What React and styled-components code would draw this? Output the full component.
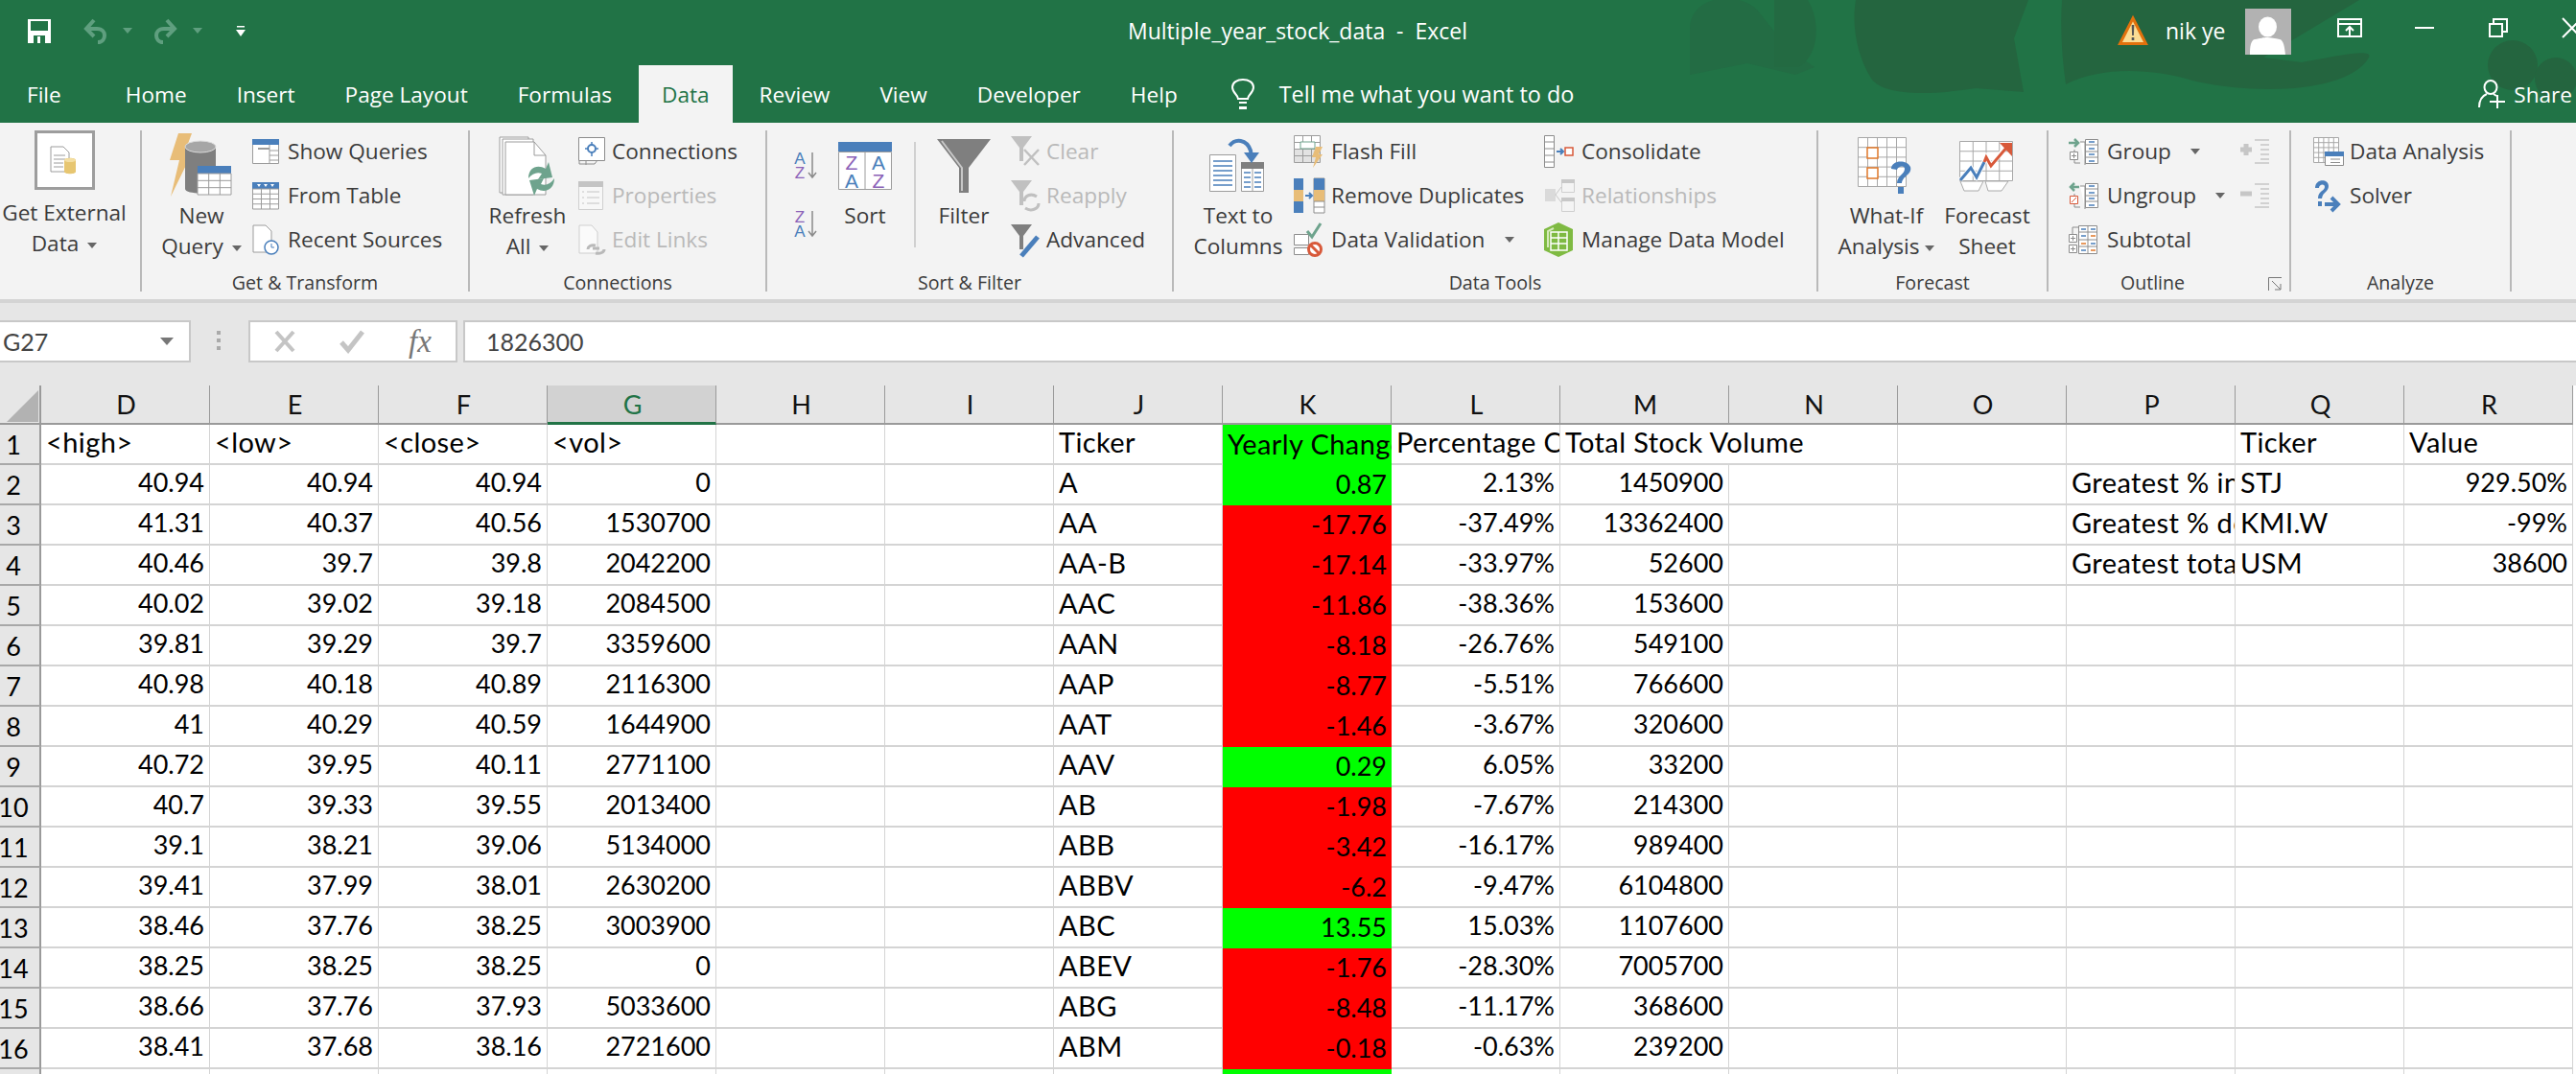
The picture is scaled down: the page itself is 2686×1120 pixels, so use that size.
import React from "react"
import styled, { createGlobalStyle } from "styled-components"

const GREEN = "#217346"
const BLUE = "#4a7fbb"
const PURPLE = "#8b62b8"
const GREY = "#7f7f7f"
const LINE = "#9a9a9a"
const OFF = "#b9b9b9"
const UI_FONT = `"Open Sans", "Noto Sans", sans-serif`
const CELL_FONT = `Lato, "Liberation Sans", sans-serif`

const GlobalStyle = createGlobalStyle`
  html, body {
    margin: 0;
    padding: 0;
    background: #ffffff;
    overflow: hidden;
  }
`

const Window = styled.div`
  width: 2686px;
  height: 1120px;
  overflow: hidden;
  font-family: ${UI_FONT};
  background: #fff;
`

/* title bar */
const TitleBar = styled.div`
  position: relative;
  height: 128px;
  background: ${GREEN};
  overflow: hidden;
`
const Backdrop = styled.svg`
  position: absolute;
  left: 0;
  top: 0;
`
const TopRow = styled.div`
  position: relative;
  display: flex;
  align-items: center;
  height: 68px;
  padding-bottom: 4px;
  box-sizing: border-box;
  color: #fff;
  font-size: 23px;
`
const Qat = styled.div`
  display: flex;
  align-items: center;
  flex: 0 0 1176px;
  box-sizing: border-box;
  padding-left: 28px;
`
const QatSlot = styled.div`
  display: flex;
  margin-left: ${(p) => p.$ml || 0}px;
`
const QatCaret = styled.div`
  margin-left: ${(p) => p.$ml || 0}px;
  border-left: 5px solid transparent;
  border-right: 5px solid transparent;
  border-top: 6px solid #5f9f7f;
`
const DocTitle = styled.div`
  flex: 0 0 1033px;
  white-space: pre;
`
const Account = styled.div`
  display: flex;
  align-items: center;
`
const UserName = styled.div`
  margin: 0 20px 0 19px;
  width: 63px;
  white-space: nowrap;
`
const Avatar = styled.svg`
  display: block;
  margin-top: 2px;
`
const WindowButton = styled.div`
  display: flex;
  margin-left: ${(p) => p.$ml}px;
  margin-top: -6px;
`
const TabRow = styled.div`
  position: relative;
  display: flex;
  align-items: stretch;
  gap: 4px;
  height: 60px;
  padding-left: 4px;
  color: #fff;
  font-size: 22.6px;
`
const Tab = styled.div`
  display: flex;
  align-items: center;
  padding: 0 24px;
  margin-right: ${(p) => p.$mr || 0}px;
  background: ${(p) => (p.$active ? "#f3f3f3" : "transparent")};
  color: ${(p) => (p.$active ? GREEN : "#fff")};
  white-space: nowrap;
`
const TellMe = styled.div`
  display: flex;
  align-items: center;
  gap: 26px;
  margin-left: 28px;
  font-size: 23.4px;
  white-space: nowrap;
`
const Share = styled.div`
  display: flex;
  align-items: center;
  gap: 9px;
  margin-left: auto;
  padding-right: 4px;
  white-space: nowrap;
`

/* ribbon */
const Ribbon = styled.div`
  display: flex;
  height: 188px;
  box-sizing: border-box;
  padding-top: 8px;
  background: #f3f3f3;
  border-bottom: 4px solid #d4d4d4;
  color: #3b3b3b;
  font-size: 22.6px;
`
const Group = styled.div`
  position: relative;
  display: flex;
  flex-direction: column;
  flex: 0 0 ${(p) => p.$w}px;
  height: 168px;
  box-sizing: border-box;
  border-right: 2px solid #b9b9b9;
`
const GroupBody = styled.div`
  display: flex;
  flex: 0 0 146px;
  padding-left: ${(p) => p.$pad || 0}px;
`
const GroupLabel = styled.div`
  height: 22px;
  line-height: 25px;
  text-align: center;
  white-space: nowrap;
  font-size: 19.6px;
  padding-right: ${(p) => p.$shift || 0}px;
`
const BigButton = styled.div`
  display: flex;
  flex-direction: column;
  align-items: center;
  flex: 0 0 ${(p) => p.$w}px;
  line-height: 32px;
  text-align: center;
  white-space: nowrap;
`
const BigIcon = styled.div`
  display: flex;
  align-items: ${(p) => (p.$top ? "flex-start" : "center")};
  justify-content: center;
  height: ${(p) => p.$h || 73}px;
`
const ExternalBox = styled.div`
  display: flex;
  align-items: center;
  justify-content: center;
  width: 63px;
  height: 62px;
  box-sizing: border-box;
  background: #fff;
  border: 3px solid #9d9d9d;
`
const Stack = styled.div`
  display: flex;
  flex-direction: column;
  flex: 0 0 ${(p) => (p.$w ? `${p.$w}px` : "auto")};
  margin-left: ${(p) => p.$ml || 0}px;
`
const SmallItem = styled.div`
  display: flex;
  align-items: center;
  height: 46px;
  box-sizing: border-box;
  padding-bottom: 3px;
  white-space: nowrap;
  color: ${(p) => (p.$off ? OFF : "inherit")};
`
const IconSlot = styled.div`
  display: flex;
  flex: 0 0 ${(p) => p.$w}px;
`
const Caret = styled.span`
  display: inline-block;
  width: 0;
  height: 0;
  margin-left: ${(p) => p.$ml || 9}px;
  vertical-align: 3px;
  border-left: 5px solid transparent;
  border-right: 5px solid transparent;
  border-top: 6px solid #666;
`
const SortStack = styled.div`
  display: flex;
  flex-direction: column;
  flex: 0 0 45px;
  gap: 31px;
  padding-top: 21px;
`
const InnerDivider = styled.div`
  flex: 0 0 2px;
  height: 110px;
  margin: 12px 20px 0 21px;
  background: #d0d0d0;
`
const Launcher = styled.svg`
  position: absolute;
  right: 8px;
  bottom: 1px;
`

/* formula bar */
const FormulaArea = styled.div`
  display: flex;
  align-items: flex-start;
  height: 86px;
  box-sizing: border-box;
  padding-top: 18px;
  background: #e6e6e6;
`
const FormulaBox = styled.div`
  display: flex;
  align-items: center;
  height: 44px;
  box-sizing: border-box;
  background: #fff;
  border: 2px solid #c8c8c8;
  color: #444;
  font-family: ${CELL_FONT};
  font-size: 25px;
`
const NameBox = styled(FormulaBox)`
  flex: 0 0 199px;
  justify-content: space-between;
  padding: 0 16px 0 3px;
  border-left: 0;
`
const NameCaret = styled.div`
  border-left: 7px solid transparent;
  border-right: 7px solid transparent;
  border-top: 8px solid #777;
`
const Grip = styled.div`
  display: flex;
  flex-direction: column;
  gap: 4px;
  flex: 0 0 60px;
  align-items: center;
  padding-top: 11px;
  padding-right: 2px;
  box-sizing: border-box;
`
const GripDot = styled.div`
  width: 4px;
  height: 4px;
  background: #aaa;
`
const FxBox = styled(FormulaBox)`
  flex: 0 0 218px;
  justify-content: center;
  gap: 46px;
  margin-right: 6px;
`
const FxMark = styled.span`
  font-family: "Liberation Serif", serif;
  font-style: italic;
  font-size: 33px;
  color: #777;
`
const FormulaInput = styled(FormulaBox)`
  flex: 1;
  padding-left: 22px;
  border-right: 0;
`

/* sheet */
const Sheet = styled.div`
  display: grid;
  grid-template-columns: 43px repeat(15, 176px) 3px;
  grid-template-rows: 41px repeat(17, 42px);
  background: #fff;
  color: #000;
  font-family: ${CELL_FONT};
  font-size: 27px;
`
const Corner = styled.div`
  display: flex;
  background: #e6e6e6;
  border-right: 2px solid ${LINE};
  border-bottom: 2px solid ${LINE};
  box-sizing: border-box;
`
const ColHeader = styled.div`
  display: flex;
  align-items: center;
  justify-content: center;
  box-sizing: border-box;
  padding-left: 2px;
  background: ${(p) => (p.$selected ? "#d2d2d2" : "#e6e6e6")};
  color: ${(p) => (p.$selected ? GREEN : "#111")};
  border-right: 1px solid ${LINE};
  border-bottom: ${(p) => (p.$selected ? `3px solid ${GREEN}` : `2px solid ${LINE}`)};
`
const RowHeader = styled.div`
  display: flex;
  align-items: center;
  justify-content: center;
  box-sizing: border-box;
  padding-right: 13px;
  background: #e6e6e6;
  border-right: 2px solid ${LINE};
  border-bottom: 2px solid #a8a8a8;
`
const Cell = styled.div`
  display: flex;
  align-items: flex-end;
  justify-content: ${(p) => (p.$right ? "flex-end" : "flex-start")};
  box-sizing: border-box;
  padding: 0 5px 5px;
  line-height: 34px;
  white-space: nowrap;
  overflow: ${(p) => (p.$spill ? "visible" : "hidden")};
  font-size: ${(p) => (p.$right ? 27 : 29)}px;
  letter-spacing: ${(p) => (p.$right ? 0 : 0.4)}px;
  background: ${(p) => p.$fill || "transparent"};
  border-right: ${(p) => (p.$fill || p.$spill ? "0" : "1px solid #d4d4d4")};
  border-bottom: ${(p) => (p.$fill ? "0" : "2px solid #d4d4d4")};
`
const Edge = styled.div`
  background: #fff;
`

/* drawing helpers */
const Lines = ({ x, y, w, h, cols, rows, color = "#9c9c9c" }) => {
  const out = []
  for (let i = 0; i <= cols; i++) {
    const px = x + (w * i) / cols
    out.push(<line key={`c${i}`} x1={px} y1={y} x2={px} y2={y + h} stroke={color} strokeWidth="1" />)
  }
  for (let i = 0; i <= rows; i++) {
    const py = y + (h * i) / rows
    out.push(<line key={`r${i}`} x1={x} y1={py} x2={x + w} y2={py} stroke={color} strokeWidth="1" />)
  }
  return <g>{out}</g>
}

const Ico = ({ w, h, children }) => (
  <svg width={w} height={h} viewBox={`0 0 ${w} ${h}`} style={{ display: "block", overflow: "visible" }}>
    {children}
  </svg>
)

const Letter = ({ x, y, size, color, children }) => (
  <text x={x} y={y} fontFamily="Liberation Sans, sans-serif" fontSize={size} fill={color} textAnchor="middle">
    {children}
  </text>
)

const SaveIcon = () => (
  <Ico w={26} h={26}>
    <path d="M1 1h24v25H1z" fill="#fff" />
    <path d="M4 3h18v10H4z" fill={GREEN} />
    <path d="M7 18h12v8H7z" fill={GREEN} />
    <path d="M11 19h3v7h-3z" fill="#fff" />
  </Ico>
)
const UndoIcon = ({ flip }) => (
  <Ico w={26} h={27}>
    <g transform={flip ? "translate(26 0) scale(-1 1)" : undefined} fill="none" stroke="#5f9f7f" strokeWidth="4">
      <path d="M12 2 4 11l8 8" />
      <path d="M4 11h11c6 0 8 4 8 7s-2 7-7 7" />
    </g>
  </Ico>
)
const CustomizeIcon = () => (
  <Ico w={10} h={12}>
    <path d="M1 1h8v1.5H1z" fill="#fff" />
    <path d="M0 5h10l-5 7z" fill="#fff" />
  </Ico>
)
const WarnIcon = () => (
  <Ico w={30} h={30}>
    <path d="M15 2 28.5 28.5H1.5z" fill="#fbdc94" stroke="#e2710d" strokeWidth="3" strokeLinejoin="miter" />
    <path d="M13.7 9h2.6l-.4 11h-1.8z" fill="#555" />
    <path d="M13.7 22h2.6v3h-2.6z" fill="#555" />
  </Ico>
)
const AvatarIcon = () => (
  <Avatar width="48" height="48" viewBox="0 0 48 48">
    <path d="M0 0h48v48H0z" fill="#b2b2b2" />
    <ellipse cx="23.5" cy="19" rx="9.5" ry="10.5" fill="#fff" />
    <path d="M5 48c0-9 1-15 5-16 6-1 9-2 13-2s8 1 13 2c4 1 5 7 6 16z" fill="#fff" />
  </Avatar>
)
const RibbonDisplayIcon = () => (
  <Ico w={26} h={20}>
    <path d="M1 1h24v18H1zM1 6h24" fill="none" stroke="#fff" strokeWidth="2" />
    <path d="M13 19V9m-4 4 4-4 4 4" fill="none" stroke="#fff" strokeWidth="2" />
  </Ico>
)
const MinIcon = () => (
  <Ico w={20} h={20}>
    <path d="M0 10h20" stroke="#fff" strokeWidth="2" />
  </Ico>
)
const RestoreIcon = () => (
  <Ico w={20} h={20}>
    <path d="M1 6h13v13H1zM5 6V1h14v13h-5" fill="none" stroke="#fff" strokeWidth="2" />
  </Ico>
)
const CloseIcon = () => (
  <Ico w={20} h={20}>
    <path d="M0 0l19 20M20 0 0 20" fill="none" stroke="#fff" strokeWidth="2" />
  </Ico>
)
const ShareIcon = () => (
  <Ico w={28} h={30}>
    <ellipse cx="13" cy="8" rx="6.5" ry="7" fill="none" stroke="#fff" strokeWidth="2" />
    <path d="M1 29c0-8 3-12 8-14M16 15l3 2" fill="none" stroke="#fff" strokeWidth="2" />
    <path d="M12 23h16M20 16v14" stroke="#fff" strokeWidth="2" />
  </Ico>
)
const BulbIcon = () => (
  <Ico w={24} h={32}>
    <path d="M7 21c0-4-6-6-6-12C1 4 6 1 12 1s11 3 11 8c0 6-6 8-6 12z" fill="none" stroke="#fff" strokeWidth="2" />
    <path d="M8 24h8v2H8zM8 29h8v3H8z" fill="#fff" />
  </Ico>
)

const ExternalDataIcon = () => (
  <Ico w={30} h={30}>
    <path d="M1 1h13l6 6v20H1z" fill="#fff" stroke="#9c9c9c" />
    <path d="M4 10h12M4 14h12M4 18h10M4 22h10" stroke="#9c9c9c" />
    <path d="M15 15c0-3 12-3 12 0v12c0 3-12 3-12 0z" fill="#e7c671" />
    <ellipse cx="21" cy="15" rx="6" ry="2" fill="#f4dfa3" />
  </Ico>
)
const NewQueryIcon = () => (
  <Ico w={68} h={68}>
    <path d="M10 0h14l-7 19h8L2 66l9-38H1z" fill="#e8bd78" />
    <path d="M17 14c0-6 32-6 32 0v44c0 6-32 6-32 0z" fill={GREY} />
    <ellipse cx="33" cy="14" rx="16" ry="6" fill="#a6a6a6" stroke="#dcdcdc" />
    <path d="M30 34h35v30H30z" fill="#fff" />
    <path d="M30 34h35v8H30z" fill={BLUE} />
    <Lines x={30} y={42} w={35} h={22} cols={3} rows={3} />
  </Ico>
)
const ShowQueriesIcon = () => (
  <Ico w={28} h={26}>
    <path d="M.5.5h27v25H.5z" fill="#fff" stroke="#9c9c9c" />
    <path d="M0 0h28v6H0z" fill={BLUE} />
    <path d="M6 9h12v2H6z" fill="#9c9c9c" />
    <path d="M18 12h10M18 17h10M18 22h10M18 6v20" stroke="#9c9c9c" />
  </Ico>
)
const FromTableIcon = () => (
  <Ico w={28} h={28}>
    <path d="M.5.5h27v27H.5z" fill="#fff" />
    <path d="M0 0h28v7H0z" fill={BLUE} />
    <path d="M5 2h4l-2 3zM12 2h4l-2 3zM19 2h4l-2 3z" fill="#fff" />
    <Lines x={0.5} y={7} w={27} h={21} cols={3} rows={4} />
  </Ico>
)
const RecentIcon = () => (
  <Ico w={28} h={32}>
    <path d="M1 1h13l6 6v22H1z" fill="#fff" stroke="#9c9c9c" />
    <circle cx="20" cy="24" r="7" fill="#fff" stroke={BLUE} strokeWidth="1.5" />
    <path d="M20 20v4h3" fill="none" stroke={BLUE} />
  </Ico>
)
const RefreshIcon = () => (
  <Ico w={60} h={62}>
    <path d="M1 1h30v58H1z" fill="#fff" stroke="#9c9c9c" />
    <path d="M4 3h32v58H4z" fill="#fff" stroke="#9c9c9c" />
    <path d="M7 6h30l12 14v41H7z" fill="#fff" stroke="#9c9c9c" />
    <path d="M37 6v14h12" fill="none" stroke="#9c9c9c" />
    <path d="M31 44c0-11 9-15 18-10l3-7 4 16-15 2 4-6c-5-2-10 0-14 5z" fill="#6ea38d" />
    <path d="M58 44c0 11-9 16-18 11l-3 7-5-16 15-2-3 6c5 2 10 0 14-6z" fill="#6ea38d" />
  </Ico>
)
const ConnectionsIcon = () => (
  <Ico w={28} h={30}>
    <path d="M.5.5h27v24H.5z" fill="#fff" stroke="#8c8c8c" />
    <path d="M14 5v15M7 12h14" stroke={BLUE} strokeWidth="1.5" />
    <circle cx="14" cy="12" r="4" fill="#fff" stroke={BLUE} strokeWidth="2" />
    <path d="M1 25v3h16l3-4M8 25v4" fill="none" stroke="#8c8c8c" />
  </Ico>
)
const PropertiesIcon = () => (
  <Ico w={26} h={30}>
    <path d="M.5.5h25v29H.5z" fill="#f7f7f7" stroke="#cfcfcf" />
    <path d="M0 0h26v6H0z" fill="#c4c4c4" />
    <path d="M4 11h2M4 17h2M4 23h2M9 11h13M9 17h13M9 23h13" stroke="#c4c4c4" />
  </Ico>
)
const EditLinksIcon = () => (
  <Ico w={28} h={32}>
    <path d="M1 1h13l6 7v22H1z" fill="#fafafa" stroke="#cfcfcf" />
    <path d="M10 26c0-3 3-5 8-4M27 26c0 3-4 5-9 4" fill="none" stroke="#b9b9b9" strokeWidth="3" />
    <path d="M15 25h7" stroke="#b9b9b9" strokeWidth="3" />
  </Ico>
)
const SortSmallIcon = ({ first, second, c1, c2 }) => (
  <Ico w={27} h={30}>
    <Letter x={7} y={14} size={17} color={c1}>{first}</Letter>
    <Letter x={7} y={29} size={17} color={c2}>{second}</Letter>
    <path d="M20 2v26M16 23l4 5 4-5" fill="none" stroke="#8a8a8a" strokeWidth="1.5" />
  </Ico>
)
const SortBigIcon = () => (
  <Ico w={56} h={50}>
    <path d="M.5 10.5h55v39H.5zM28 10v40" fill="#fff" stroke="#9c9c9c" />
    <path d="M0 0h56v10H0z" fill={BLUE} />
    <Letter x={14} y={29} size={21} color={PURPLE}>Z</Letter>
    <Letter x={14} y={48} size={21} color={BLUE}>A</Letter>
    <Letter x={42} y={29} size={21} color={BLUE}>A</Letter>
    <Letter x={42} y={48} size={21} color={PURPLE}>Z</Letter>
  </Ico>
)
const FunnelBig = () => (
  <Ico w={56} h={56}>
    <path d="M0 0h56L33 30v26H23V30z" fill={GREY} />
    <path d="M5 2 26 30v24" fill="none" stroke="#c8c8c8" strokeWidth="2" />
  </Ico>
)
const FunnelSmall = ({ color, children }) => (
  <Ico w={32} h={32}>
    <path d="M0 0h22L13 12v14H9V12z" fill={color} />
    {children}
  </Ico>
)
const ClearIcon = () => (
  <FunnelSmall color="#c0c0c0">
    <path d="M14 14l15 16M29 14 14 30" stroke="#c0c0c0" strokeWidth="2.5" />
  </FunnelSmall>
)
const ReapplyIcon = () => (
  <FunnelSmall color="#c0c0c0">
    <path d="M14 22c0-6 7-9 13-5M29 24c0 6-8 9-14 5" fill="none" stroke="#c0c0c0" strokeWidth="3" />
  </FunnelSmall>
)
const AdvancedIcon = () => (
  <FunnelSmall color={GREY}>
    <path d="M28 13 11 33" stroke={BLUE} strokeWidth="5" />
  </FunnelSmall>
)
const TextColumnsIcon = () => (
  <Ico w={60} h={56}>
    <path d="M.5 16.5h27v38H.5z" fill="#fff" stroke="#9c9c9c" />
    <path d="M4 23h20M4 28h20M4 33h20M4 38h20M4 43h20M4 48h20" stroke={BLUE} strokeWidth="1.5" />
    <path d="M33.5 24.5h23v30h-23zM45 24v30" fill="#fff" stroke="#9c9c9c" />
    <path d="M33 24h24v7H33z" fill={GREY} />
    <path d="M36 35h7M47 35h7M36 40h7M47 40h7M36 45h7M47 45h7M36 50h7M47 50h7" stroke={BLUE} strokeWidth="1.5" />
    <path d="M21 7c6-8 18-7 22 5l1 8" fill="none" stroke={BLUE} strokeWidth="4" />
    <path d="M36 14h16l-8 11z" fill={BLUE} />
  </Ico>
)
const FlashFillIcon = () => (
  <Ico w={30} h={34}>
    <path d="M.5.5h27v28H.5z" fill="#fff" />
    <path d="M1 14h26v14H1z" fill="#e2e2e2" />
    <Lines x={0.5} y={0.5} w={27} h={28} cols={3} rows={4} />
    <path d="M7 7h15v7H7z" fill="#fff" stroke="#6ea38d" />
    <path d="M23 12h7l-4 8h4L20 34l3-11h-4z" fill="#e8bd78" />
  </Ico>
)
const RemoveDupIcon = () => (
  <Ico w={32} h={36}>
    <path d="M0 0h10v36H0z" fill={BLUE} />
    <path d="M0 12h10v12H0z" fill="#e8bd78" />
    <path d="M21 0h11v36H21z" fill="#fff" stroke="#8c8c8c" />
    <path d="M21 0h11v12H21z" fill={BLUE} />
    <path d="M21 12h11v12H21z" fill="#e8bd78" />
    <path d="M21 24h11M21 30h11" stroke="#8c8c8c" />
    <path d="M12 18h7M16 15l3 3-3 3" fill="none" stroke={BLUE} strokeWidth="2" />
  </Ico>
)
const ValidationIcon = () => (
  <Ico w={30} h={36}>
    <path d="M.5 12.5h15v11H.5zM.5 26.5h15v7H.5z" fill="#fff" stroke="#8c8c8c" />
    <path d="M14 9l5 6L28 1" fill="none" stroke="#6ea38d" strokeWidth="3" />
    <circle cx="22" cy="28" r="6.5" fill="#fff" stroke="#d8593a" strokeWidth="3" />
    <path d="M17.5 23.5l9 9" stroke="#d8593a" strokeWidth="3" />
  </Ico>
)
const ConsolidateIcon = () => (
  <Ico w={30} h={34}>
    <path d="M.5.5h10v33H.5z" fill="#fff" stroke="#8c8c8c" />
    <path d="M0 7h11M0 14h11M0 21h11M0 28h11" stroke="#8c8c8c" />
    <path d="M13 17h7M17 14l3 3-3 3" fill="none" stroke={BLUE} strokeWidth="2" />
    <path d="M22 13h8v8h-8z" fill="#fff" stroke="#d8593a" strokeWidth="1.5" />
  </Ico>
)
const RelationshipsIcon = () => (
  <Ico w={32} h={36}>
    <path d="M1 11h11v13H1z" fill="#dadada" />
    <path d="M18.5 1.500h13v13h-13zM18.5 20.500h13v14h-13z" fill="#f4f4f4" stroke="#cfcfcf" />
    <path d="M18 1h14v4H18zM18 20h14v4H18z" fill="#c8c8c8" />
    <path d="M12 17l6-8M12 17l6 8" fill="none" stroke="#c8c8c8" />
  </Ico>
)
const ModelIcon = () => (
  <Ico w={30} h={36}>
    <path d="M15 0 30 7v22l-15 7L0 29V7z" fill="#7fba42" />
    <path d="M7 10h17v19H7z" fill="none" stroke="#fff" strokeWidth="1.5" />
    <path d="M7 16h17M15 10v19M7 22h17" stroke="#fff" strokeWidth="1.5" />
    <path d="M10 6 4 9v17" fill="none" stroke="#d6eabb" strokeWidth="2" />
  </Ico>
)
const WhatIfIcon = () => (
  <Ico w={60} h={60}>
    <path d="M.5.5h50v51H.5z" fill="#fff" />
    <Lines x={0.5} y={0.5} w={50} h={51} cols={5} rows={5} color="#a8a8a8" />
    <path d="M10 11h11v11H10zM10 32h11v11H10z" fill="#fff" stroke="#e0782a" strokeWidth="1.5" />
    <path d="M35 33c0-9 16-10 20-2 2 8-8 9-9 17h-5c0-8 8-9 8-15 0-4-7-3-8 1z" fill={BLUE} />
    <path d="M42 52h6v7h-6z" fill={BLUE} />
  </Ico>
)
const ForecastIcon = () => (
  <Ico w={58} h={52}>
    <path d="M.5.5h55v41H.5z" fill="#fff" />
    <Lines x={0.5} y={0.5} w={55} h={41} cols={4} rows={4} color="#a8a8a8" />
    <path d="M1 41 12 28l6 10 10-21 5 9L50 4" fill="none" stroke="#fff" strokeWidth="5" />
    <path d="M1 41 12 28l6 10 8-16" fill="none" stroke={BLUE} strokeWidth="3" />
    <path d="M26 22l2-5 5 9L50 6" fill="none" stroke="#d8593a" strokeWidth="3" />
    <path d="M42 2h13v14z" fill="#d8593a" />
    <path d="M1 42h24l-5 10H5zM27 42h24l-7 10H30z" fill="#fff" stroke="#aaa" />
  </Ico>
)
const GroupIcon = ({ arrow, red }) => (
  <Ico w={32} h={28}>
    <path d={arrow === "in" ? "M0 5h9M6 1l4 4-4 4" : "M11 5H2M6 1 2 5l4 4"} fill="none" stroke="#6ea38d" strokeWidth="2.5" />
    <path d="M6 12v14h6" fill="none" stroke="#8c8c8c" />
    <path d="M1.500 14.500h8v8h-8z" fill="#fff" stroke={red ? "#d8593a" : "#8c8c8c"} />
    {red ? <path d="M3 21l5-5" stroke="#d8593a" /> : <path d="M3 18.500h5M5.500 16v5" stroke="#8c8c8c" />}
    <path d="M12 4h5v24M17.500 1.500h13v25h-13z" fill="#fff" stroke="#8c8c8c" />
    <path d="M18 7h12M18 14h12M18 20h12" stroke="#8c8c8c" />
    <path d="M21 4h6M21 11h6M21 17h6M21 24h6" stroke={BLUE} strokeWidth="1.5" />
  </Ico>
)
const SubtotalIcon = () => (
  <Ico w={30} h={30}>
    <path d="M.5 9.500h8v8h-8zM.5 20.500h8v8h-8z" fill="#fff" stroke="#8c8c8c" />
    <path d="M2 13.500h5M4.500 11v5M2 24.500h5M4.500 22v5M4 2v7M4 2h6" fill="none" stroke="#8c8c8c" />
    <path d="M10.500.5h19v29h-19zM20 0v30M10 7h20M10 15h20M10 22h20" fill="#fff" stroke="#8c8c8c" />
    <path d="M13 4h5M23 4h5M13 11h5" stroke={BLUE} strokeWidth="1.5" />
    <path d="M23 11h5M13 19h5M23 26h5" stroke="#e0782a" strokeWidth="1.5" />
    <path d="M13 26h5M23 19h5" stroke={BLUE} strokeWidth="1.5" />
  </Ico>
)
const DetailIcon = ({ plus }) => (
  <Ico w={30} h={26}>
    <path d={plus ? "M0 11h12M6 5v12" : "M0 11h12"} stroke="#c6c6c6" strokeWidth="5" />
    <path d="M15 1h15M21 6h9M21 11h9M21 16h9M21 21h9M15 25h15" stroke="#c6c6c6" strokeWidth="1.5" />
  </Ico>
)
const DataAnalysisIcon = () => (
  <Ico w={32} h={30}>
    <path d="M.5.5h26v26H.5z" fill="#fff" />
    <Lines x={0.5} y={0.5} w={26} h={26} cols={5} rows={5} color="#a8a8a8" />
    <path d="M12.500 16.500h19v13h-19z" fill="#fff" stroke="#8c8c8c" />
    <path d="M12 15h20v5H12z" fill={BLUE} />
    <path d="M18 23h10M18 26.500h10" stroke="#8c8c8c" />
  </Ico>
)
const SolverIcon = () => (
  <Ico w={30} h={34}>
    <path d="M2 9c0-10 14-10 14-2 0 6-6 6-7 13H5c0-8 7-8 7-12 0-4-6-3-6 1z" fill={BLUE} />
    <path d="M5 23h4v5H5z" fill={BLUE} />
    <path d="M12 26h12M19 19l7 7-7 7" fill="none" stroke={BLUE} strokeWidth="4" />
  </Ico>
)
const CrossMark = () => (
  <Ico w={22} h={22}>
    <path d="M2 1l18 20M20 1 2 21" stroke="#c4c4c4" strokeWidth="4" />
  </Ico>
)
const CheckMark = () => (
  <Ico w={26} h={22}>
    <path d="M2 12l7 8L24 1" fill="none" stroke="#c4c4c4" strokeWidth="5" />
  </Ico>
)

const Small = ({ icon, slot, off, children }) => (
  <SmallItem $off={off}>
    <IconSlot $w={slot}>{icon}</IconSlot>
    {children}
  </SmallItem>
)

const COLS = ["D", "E", "F", "G", "H", "I", "J", "K", "L", "M", "N", "O", "P", "Q", "R"]

const ROWS = [
  ["40.94", "40.94", "40.94", "0", "A", "0.87", "2.13%", "1450900"],
  ["41.31", "40.37", "40.56", "1530700", "AA", "-17.76", "-37.49%", "13362400"],
  ["40.46", "39.7", "39.8", "2042200", "AA-B", "-17.14", "-33.97%", "52600"],
  ["40.02", "39.02", "39.18", "2084500", "AAC", "-11.86", "-38.36%", "153600"],
  ["39.81", "39.29", "39.7", "3359600", "AAN", "-8.18", "-26.76%", "549100"],
  ["40.98", "40.18", "40.89", "2116300", "AAP", "-8.77", "-5.51%", "766600"],
  ["41", "40.29", "40.59", "1644900", "AAT", "-1.46", "-3.67%", "320600"],
  ["40.72", "39.95", "40.11", "2771100", "AAV", "0.29", "6.05%", "33200"],
  ["40.7", "39.33", "39.55", "2013400", "AB", "-1.98", "-7.67%", "214300"],
  ["39.1", "38.21", "39.06", "5134000", "ABB", "-3.42", "-16.17%", "989400"],
  ["39.41", "37.99", "38.01", "2630200", "ABBV", "-6.2", "-9.47%", "6104800"],
  ["38.46", "37.76", "38.25", "3003900", "ABC", "13.55", "15.03%", "1107600"],
  ["38.25", "38.25", "38.25", "0", "ABEV", "-1.76", "-28.30%", "7005700"],
  ["38.66", "37.76", "37.93", "5033600", "ABG", "-8.48", "-11.17%", "368600"],
  ["38.41", "37.68", "38.16", "2721600", "ABM", "-0.18", "-0.63%", "239200"],
]
const SUMMARY = [
  ["Greatest % increase", "STJ", "929.50%"],
  ["Greatest % decrease", "KMI.W", "-99%"],
  ["Greatest total volume", "USM", "38600"],
]

const buildRow = (r) => {
  const s = SUMMARY[r] || ["", "", ""]
  const [d, e, f, g, j, k, l, m] = ROWS[r]
  return [d, e, f, g, "", "", j, k, l, m, "", "", s[0], s[1], s[2]]
}

const fillFor = (value) => (parseFloat(value) >= 0 ? "#00ff00" : "#ff0000")

const Grid = () => {
  const headerRow = ["<high>", "<low>", "<close>", "<vol>", "", "", "Ticker", "Yearly Change", "Percentage Change", "Total Stock Volume", "", "", "", "Ticker", "Value"]
  return (
    <Sheet>
      <Corner>
        <svg width="41" height="39" viewBox="0 0 41 39">
          <path d="M7 38 40 5v33z" fill="#b2b2b2" />
        </svg>
      </Corner>
      {COLS.map((c) => (
        <ColHeader key={c} $selected={c === "G"}>{c}</ColHeader>
      ))}
      <Edge />

      <RowHeader>1</RowHeader>
      {headerRow.map((v, i) => (
        <Cell key={i} $fill={COLS[i] === "K" ? "#00ff00" : undefined} $spill={COLS[i] === "M"}>{v}</Cell>
      ))}
      <Edge />

      {ROWS.map((_, r) => (
        <React.Fragment key={r}>
          <RowHeader>{r + 2}</RowHeader>
          {buildRow(r).map((v, i) => (
            <Cell
              key={i}
              $right={i < 4 || i === 7 || i === 8 || i === 9 || i === 14}
              $fill={COLS[i] === "K" ? fillFor(v) : undefined}
            >
              {v}
            </Cell>
          ))}
          <Edge />
        </React.Fragment>
      ))}

      <RowHeader>17</RowHeader>
      {COLS.map((c) => (
        <Cell key={c} $fill={c === "K" ? "#00ff00" : undefined} />
      ))}
      <Edge />
    </Sheet>
  )
}

const App = () => (
  <Window>
    <GlobalStyle />
    <TitleBar>
      <Backdrop width="2686" height="128" viewBox="0 0 2686 128">
        <path d="M1762 30c0-35 50-40 70-20 20 25 30 40 60 60l-20 8-50-12-60 12z" fill="#236c44" />
        <path d="M1935 0c-5 30 3 60 15 80 10 20 60 20 110 12l50 4-10-56 15-40z" fill="#24653f" />
        <path d="M1850 0h35c15 25 10 60-10 70h-25z" fill="#236a42" />
        <path d="M2150 0c-2 30 0 60 4 88 36-18 86-18 136-3 70 15 160 10 180-25 5-10-30-2-70 5l-40-5 100-60z" fill="#24653f" />
        <circle cx="2620" cy="68" r="26" fill="#24653f" />
        <circle cx="2665" cy="82" r="22" fill="#24653f" />
      </Backdrop>
      <TopRow>
        <Qat>
          <SaveIcon />
          <QatSlot $ml={32}><UndoIcon /></QatSlot>
          <QatCaret $ml={16} />
          <QatSlot $ml={22}><UndoIcon flip /></QatSlot>
          <QatCaret $ml={15} />
          <QatSlot $ml={35}><CustomizeIcon /></QatSlot>
        </Qat>
        <DocTitle>Multiple_year_stock_data  -  Excel</DocTitle>
        <Account>
          <WarnIcon />
          <UserName>nik ye</UserName>
          <AvatarIcon />
          <WindowButton $ml={48}><RibbonDisplayIcon /></WindowButton>
          <WindowButton $ml={55}><MinIcon /></WindowButton>
          <WindowButton $ml={57}><RestoreIcon /></WindowButton>
          <WindowButton $ml={57}><CloseIcon /></WindowButton>
        </Account>
      </TopRow>
      <TabRow>
        <Tab $mr={15}>File</Tab>
        <Tab>Home</Tab>
        <Tab>Insert</Tab>
        <Tab>Page Layout</Tab>
        <Tab>Formulas</Tab>
        <Tab $active>Data</Tab>
        <Tab>Review</Tab>
        <Tab>View</Tab>
        <Tab>Developer</Tab>
        <Tab>Help</Tab>
        <TellMe>
          <BulbIcon />
          Tell me what you want to do
        </TellMe>
        <Share>
          <ShareIcon />
          Share
        </Share>
      </TabRow>
    </TitleBar>

    <Ribbon>
      <Group $w={148}>
        <GroupBody>
          <BigButton $w={134}>
            <BigIcon $h={70} $top>
              <ExternalBox><ExternalDataIcon /></ExternalBox>
            </BigIcon>
            Get External
            <div>Data<Caret /></div>
          </BigButton>
        </GroupBody>
      </Group>

      <Group $w={342}>
        <GroupBody $pad={9}>
          <BigButton $w={106}>
            <BigIcon><NewQueryIcon /></BigIcon>
            New
            <div>Query<Caret /></div>
          </BigButton>
          <Stack>
            <Small slot={37} icon={<ShowQueriesIcon />}>Show Queries</Small>
            <Small slot={37} icon={<FromTableIcon />}>From Table</Small>
            <Small slot={37} icon={<RecentIcon />}>Recent Sources</Small>
          </Stack>
        </GroupBody>
        <GroupLabel>Get &amp; Transform</GroupLabel>
      </Group>

      <Group $w={310}>
        <GroupBody $pad={7}>
          <BigButton $w={106}>
            <BigIcon><RefreshIcon /></BigIcon>
            Refresh
            <div>All<Caret /></div>
          </BigButton>
          <Stack>
            <Small slot={35} icon={<ConnectionsIcon />}>Connections</Small>
            <Small slot={35} off icon={<PropertiesIcon />}>Properties</Small>
            <Small slot={35} off icon={<EditLinksIcon />}>Edit Links</Small>
          </Stack>
        </GroupBody>
        <GroupLabel>Connections</GroupLabel>
      </Group>

      <Group $w={424}>
        <GroupBody $pad={27}>
          <SortStack>
            <SortSmallIcon first="A" second="Z" c1={BLUE} c2={PURPLE} />
            <SortSmallIcon first="Z" second="A" c1={PURPLE} c2={BLUE} />
          </SortStack>
          <BigButton $w={60}>
            <BigIcon><SortBigIcon /></BigIcon>
            Sort
          </BigButton>
          <InnerDivider />
          <BigButton $w={60}>
            <BigIcon><FunnelBig /></BigIcon>
            Filter
          </BigButton>
          <Stack $ml={19}>
            <Small slot={37} off icon={<ClearIcon />}>Clear</Small>
            <Small slot={37} off icon={<ReapplyIcon />}>Reapply</Small>
            <Small slot={37} icon={<AdvancedIcon />}>Advanced</Small>
          </Stack>
        </GroupBody>
        <GroupLabel>Sort &amp; Filter</GroupLabel>
      </Group>

      <Group $w={672}>
        <GroupBody $pad={9}>
          <BigButton $w={116}>
            <BigIcon><TextColumnsIcon /></BigIcon>
            Text to
            <div>Columns</div>
          </BigButton>
          <Stack $w={261}>
            <Small slot={39} icon={<FlashFillIcon />}>Flash Fill</Small>
            <Small slot={39} icon={<RemoveDupIcon />}>Remove Duplicates</Small>
            <Small slot={39} icon={<ValidationIcon />}>Data Validation<Caret $ml={21} /></Small>
          </Stack>
          <Stack>
            <Small slot={39} icon={<ConsolidateIcon />}>Consolidate</Small>
            <Small slot={39} off icon={<RelationshipsIcon />}>Relationships</Small>
            <Small slot={39} icon={<ModelIcon />}>Manage Data Model</Small>
          </Stack>
        </GroupBody>
        <GroupLabel>Data Tools</GroupLabel>
      </Group>

      <Group $w={240}>
        <GroupBody $pad={11}>
          <BigButton $w={120}>
            <BigIcon><WhatIfIcon /></BigIcon>
            What-If
            <div>Analysis<Caret $ml={6} /></div>
          </BigButton>
          <BigButton $w={90}>
            <BigIcon><ForecastIcon /></BigIcon>
            Forecast
            <div>Sheet</div>
          </BigButton>
        </GroupBody>
        <GroupLabel>Forecast</GroupLabel>
      </Group>

      <Group $w={253}>
        <GroupBody $pad={21}>
          <Stack $w={179}>
            <Small slot={40} icon={<GroupIcon arrow="in" />}>Group<Caret $ml={20} /></Small>
            <Small slot={40} icon={<GroupIcon arrow="out" red />}>Ungroup<Caret $ml={20} /></Small>
            <Small slot={40} icon={<SubtotalIcon />}>Subtotal</Small>
          </Stack>
          <Stack>
            <SmallItem><DetailIcon plus /></SmallItem>
            <SmallItem><DetailIcon /></SmallItem>
          </Stack>
        </GroupBody>
        <GroupLabel $shift={34}>Outline</GroupLabel>
        <Launcher width="14" height="14" viewBox="0 0 14 14">
          <path d="M.5 14V.5H14M4 4l9 9M7 13h6V7" fill="none" stroke="#777" />
        </Launcher>
      </Group>

      <Group $w={230}>
        <GroupBody $pad={23}>
          <Stack>
            <Small slot={38} icon={<DataAnalysisIcon />}>Data Analysis</Small>
            <Small slot={38} icon={<SolverIcon />}>Solver</Small>
          </Stack>
        </GroupBody>
        <GroupLabel>Analyze</GroupLabel>
      </Group>
    </Ribbon>

    <FormulaArea>
      <NameBox>G27<NameCaret /></NameBox>
      <Grip>
        <GripDot />
        <GripDot />
        <GripDot />
      </Grip>
      <FxBox>
        <CrossMark />
        <CheckMark />
        <FxMark>fx</FxMark>
      </FxBox>
      <FormulaInput>1826300</FormulaInput>
    </FormulaArea>

    <Grid />
  </Window>
)

export default App
